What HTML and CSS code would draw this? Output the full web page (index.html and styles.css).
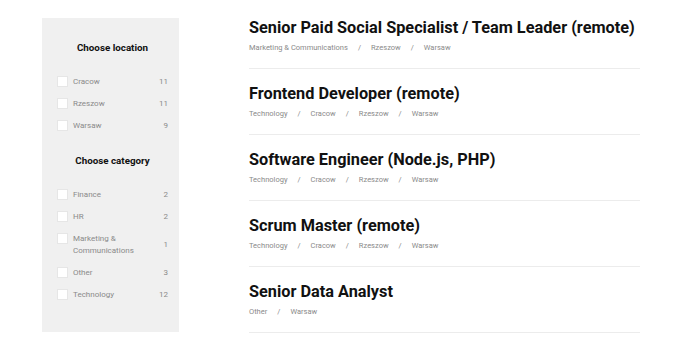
FILE: index.html
```html
<!DOCTYPE html>
<html>
<head>
    <meta charset="UTF-8">
    <title>Careers</title>
    <link rel="stylesheet" href="styles.css">
</head>
<body>
    <div class="page">
        <aside class="filters">
            <h3>Choose location</h3>
            <ul class="filter-list">
                <li><span class="box"></span><span class="name">Cracow</span><span class="count">11</span></li>
                <li><span class="box"></span><span class="name">Rzeszow</span><span class="count">11</span></li>
                <li><span class="box"></span><span class="name">Warsaw</span><span class="count">9</span></li>
            </ul>
            <h3>Choose category</h3>
            <ul class="filter-list">
                <li><span class="box"></span><span class="name">Finance</span><span class="count">2</span></li>
                <li><span class="box"></span><span class="name">HR</span><span class="count">2</span></li>
                <li><span class="box"></span><span class="name">Marketing &amp;<br>Communications</span><span class="count">1</span></li>
                <li><span class="box"></span><span class="name">Other</span><span class="count">3</span></li>
                <li><span class="box"></span><span class="name">Technology</span><span class="count">12</span></li>
            </ul>
        </aside>

        <main class="jobs">
            <div class="job">
                <h2>Senior Paid Social Specialist / Team Leader (remote)</h2>
                <p class="meta"><span>Marketing &amp; Communications</span><span>Rzeszow</span><span>Warsaw</span></p>
            </div>
            <div class="job">
                <h2>Frontend Developer (remote)</h2>
                <p class="meta"><span>Technology</span><span>Cracow</span><span>Rzeszow</span><span>Warsaw</span></p>
            </div>
            <div class="job">
                <h2>Software Engineer (Node.js, PHP)</h2>
                <p class="meta"><span>Technology</span><span>Cracow</span><span>Rzeszow</span><span>Warsaw</span></p>
            </div>
            <div class="job">
                <h2>Scrum Master (remote)</h2>
                <p class="meta"><span>Technology</span><span>Cracow</span><span>Rzeszow</span><span>Warsaw</span></p>
            </div>
            <div class="job">
                <h2>Senior Data Analyst</h2>
                <p class="meta"><span>Other</span><span>Warsaw</span></p>
            </div>
        </main>
    </div>
</body>
</html>
```

FILE: styles.css
```css
/* job board listing */
body {
    margin: 0;
    font-family: Roboto, "Liberation Sans", Arial, sans-serif;
    background-color: #fff;
    color: #111;
}

.page {
    display: flex;
    align-items: flex-start;
    gap: 70px;
    padding-left: 42px;
}

.filters {
    width: 137px;
    margin-top: 18px;
    padding: 23px 11px 26px 15px;
    box-sizing: border-box;
    background-color: #f0f0f0;
}

.filters h3 {
    margin: 0 0 16px;
    font-size: 9.8px;
    line-height: 14px;
    font-weight: 700;
    text-align: center;
    color: #111;
}

.filter-list {
    list-style: none;
    margin: 0 0 17px;
    padding: 0;
}

.filter-list:last-child {
    margin-bottom: 0;
}

.filter-list li {
    display: flex;
    align-items: flex-start;
    padding: 5px 0;
    font-size: 8px;
    line-height: 12px;
    color: #8a8a8a;
}

.box {
    width: 11px;
    height: 11px;
    margin-right: 5px;
    background-color: #fff;
    border: 1px solid #e6e6e6;
    box-sizing: border-box;
    flex-shrink: 0;
}

.name {
    flex: 1;
}

.count {
    align-self: center;
}

.jobs {
    width: 391px;
    padding-top: 3px;
}

.job {
    padding: 14px 0;
    border-bottom: 1px solid #ececec;
}

.job h2 {
    margin: 0 0 3px;
    font-size: 16.3px;
    line-height: 22px;
    font-weight: 700;
    white-space: nowrap;
    color: #111;
}

.meta {
    margin: 0;
    font-size: 7.5px;
    line-height: 12px;
    color: #8a8a8a;
}

.meta span + span::before {
    content: "/";
    margin: 0 10px;
}
```
